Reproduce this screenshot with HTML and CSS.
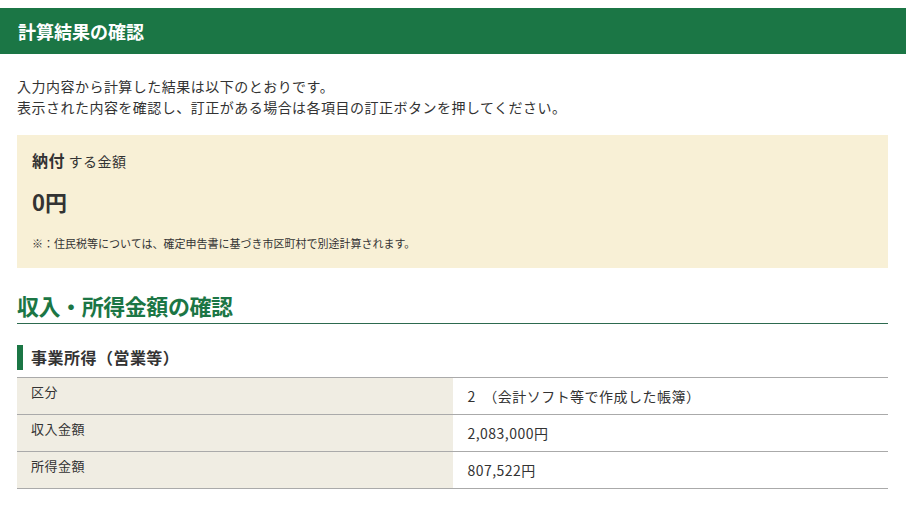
FILE: index.html
```html
<!DOCTYPE html>
<html lang="ja">
<head>
<meta charset="utf-8">
<title>計算結果の確認</title>
<link rel="stylesheet" href="styles.css">
</head>
<body>
<header class="page-header">
  <h1 class="page-title">計算結果の確認</h1>
</header>
<main class="content">
  <p class="intro">入力内容から計算した結果は以下のとおりです。<br>表示された内容を確認し、訂正がある場合は各項目の訂正ボタンを押してください。</p>
  <section class="result-box">
    <p class="result-label"><strong>納付</strong> する金額</p>
    <p class="result-amount">0円</p>
    <p class="result-note">※：住民税等については、確定申告書に基づき市区町村で別途計算されます。</p>
  </section>
  <h2 class="section-title">収入・所得金額の確認</h2>
  <h3 class="sub-title">事業所得（営業等）</h3>
  <table class="data-table">
    <tr><th>区分</th><td>2　（会計ソフト等で作成した帳簿）</td></tr>
    <tr><th>収入金額</th><td>2,083,000円</td></tr>
    <tr><th>所得金額</th><td>807,522円</td></tr>
  </table>
</main>
</body>
</html>
```
FILE: styles.css
```css
html, body {
  margin: 0;
  padding: 0;
  background: #ffffff;
}
body {
  padding-top: 8px;
  font-family: "Noto Sans CJK JP", "Noto Sans", sans-serif;
  color: #333333;
  letter-spacing: 0.03em;
}
.page-header {
  background: #1b7645;
  height: 46px;
  display: flex;
  align-items: center;
  padding: 0 18px;
}
.page-title {
  margin: 0;
  font-size: 18px;
  font-weight: bold;
  color: #ffffff;
  line-height: 24px;
  letter-spacing: 0;
}
.content {
  padding: 0 18px 0 17px;
}
.intro {
  margin: 22px 0 0;
  font-size: 14px;
  line-height: 21px;
}
.result-box {
  margin-top: 17px;
  background: #f8f0d6;
  padding: 15px 15px 17px;
}
.result-box p {
  margin: 0;
}
.result-label {
  font-size: 14px;
  line-height: 20px;
}
.result-label strong {
  font-size: 16px;
}
.result-amount {
  margin-top: 15px !important;
  font-size: 22px;
  font-weight: bold;
  line-height: 30px;
  letter-spacing: 0;
}
.result-note {
  margin-top: 19px !important;
  font-size: 11px;
  line-height: 16px;
  letter-spacing: 0;
}
.section-title {
  margin: 23px 0 0;
  font-size: 22px;
  line-height: 28px;
  font-weight: bold;
  color: #1b7645;
  padding-bottom: 4px;
  border-bottom: 1px solid #2d6a4f;
  letter-spacing: -0.02em;
}
.sub-title {
  margin: 21px 0 0;
  font-size: 16px;
  line-height: 25px;
  font-weight: bold;
  border-left: 6px solid #1b7645;
  padding-left: 8px;
}
.data-table {
  margin-top: 7px;
  width: 100%;
  border-collapse: collapse;
  border-top: 1px solid #aaaaaa;
}
.data-table tr {
  border-bottom: 1px solid #aaaaaa;
}
.data-table th {
  width: 50%;
  background: #f0ede3;
  text-align: left;
  vertical-align: top;
  font-weight: normal;
  font-size: 13px;
  line-height: 16px;
  padding: 6px 14px 14px;
  height: 16px;
}
.data-table td {
  font-size: 14px;
  line-height: 20px;
  padding: 8px 15px;
  vertical-align: middle;
}
```
